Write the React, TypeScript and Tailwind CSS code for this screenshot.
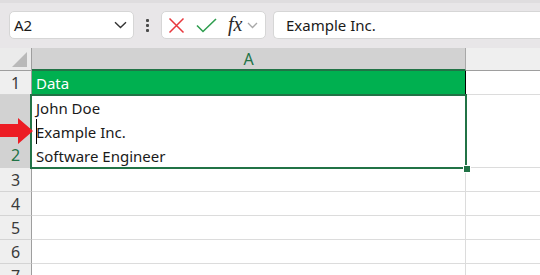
import React from 'react';

const GREEN = '#217346';

const RowHead = ({ label, selected, tall }: { label: string; selected?: boolean; tall?: boolean }) => (
    <div
        className={`w-[32px] shrink-0 flex justify-center border-r border-[#9e9e9e] text-[16px] ${
            selected ? 'bg-[#d2d2d2] text-[#217346]' : 'bg-[#efefef] text-[#3a3a3a] border-b border-b-[#d4d4d4]'
        } ${tall ? 'items-end pb-[1px]' : 'items-center'}`}
    >
        {label}
    </div>
);

const EmptyRow = ({ label }: { label: string }) => (
    <div className="flex h-[24px]">
        <RowHead label={label} />
        <div className="w-[434px] shrink-0 border-b border-r border-[#dcdcdc]" />
        <div className="flex-1 border-b border-[#dcdcdc]" />
    </div>
);

export default function App() {
    return (
        <div className="w-[540px] h-[275px] overflow-hidden bg-white font-['Noto_Sans',sans-serif] text-[#1a1a1a]">
            {/* formula bar */}
            <div className="h-[48px] bg-[#e8e6e8] border-t-[3px] border-[#dfdddf] flex items-start pt-[8px] pl-[9px]">
                <div className="w-[125px] h-[28px] bg-white rounded-[5px] border border-[#d6d6d6] flex items-center justify-between pl-[4px] pr-[6px]">
                    <span className="text-[15px] text-[#1a1a1a]">A2</span>
                    <svg width="13" height="8" viewBox="0 0 13 8" fill="none">
                        <path d="M1 1.2 L6.5 6.5 L12 1.2" stroke="#333" strokeWidth="1.4" />
                    </svg>
                </div>
                <div className="w-[4px] ml-[11px] h-[28px] flex flex-col items-center justify-center gap-[2px]">
                    <div className="w-[3px] h-[3px] bg-[#4a4a4a] rounded-[1px]" />
                    <div className="w-[3px] h-[3px] bg-[#4a4a4a] rounded-[1px]" />
                    <div className="w-[3px] h-[3px] bg-[#4a4a4a] rounded-[1px]" />
                </div>
                <div className="w-[105px] h-[28px] ml-[12px] bg-white rounded-[5px] border border-[#d6d6d6] flex items-center pl-[6px]">
                    <svg width="17" height="17" viewBox="0 0 17 17" fill="none">
                        <path d="M1.5 1.5 L15.5 15.5 M15.5 1.5 L1.5 15.5" stroke="#e8383d" strokeWidth="1.5" />
                    </svg>
                    <svg width="21" height="15" viewBox="0 0 21 15" fill="none" className="ml-[11px]">
                        <path d="M1 7.5 L7 13.5 L20 1" stroke="#2f9e4f" strokeWidth="1.6" />
                    </svg>
                    <span className="ml-[11px] font-['Liberation_Serif',serif] italic text-[20px] leading-none text-[#2a2a2a] -mt-[3px]">fx</span>
                    <svg width="11" height="7" viewBox="0 0 11 7" fill="none" className="ml-[5px]">
                        <path d="M1 1 L5.5 5.5 L10 1" stroke="#a8a8a8" strokeWidth="1.3" />
                    </svg>
                </div>
                <div className="flex-1 h-[28px] ml-[7px] bg-white rounded-l-[5px] border border-r-0 border-[#d6d6d6] flex items-center pl-[12px]">
                    <span className="text-[15px] text-[#1a1a1a]">Example Inc.</span>
                </div>
            </div>

            {/* grid */}
            <div className="relative">
                {/* column headers */}
                <div className="flex h-[23px]">
                    <div className="w-[32px] shrink-0 bg-[#ebebeb] border-r border-b border-[#9e9e9e] flex items-end justify-end pr-[4px] pb-[3px]">
                        <svg width="15" height="15" viewBox="0 0 15 15">
                            <path d="M15 0 L15 15 L0 15 Z" fill="#b9b9b9" />
                        </svg>
                    </div>
                    <div className="w-[434px] shrink-0 bg-[#d2d2d2] border-b-2 border-[#217346] border-r border-r-[#a8a8a8] flex items-center justify-center text-[16px] text-[#217346]">
                        A
                    </div>
                    <div className="flex-1 bg-[#efefef] border-b border-[#9e9e9e]" />
                </div>

                {/* row 1 */}
                <div className="flex h-[24px]">
                    <RowHead label="1" />
                    <div className="w-[434px] shrink-0 bg-[#00b050] border-r border-black flex items-center pl-[4px] text-[15px] text-white">
                        Data
                    </div>
                    <div className="flex-1 border-b border-[#dcdcdc]" />
                </div>

                {/* row 2 */}
                <div className="flex h-[73px]">
                    <RowHead label="2" selected tall />
                    <div className="w-[434px] shrink-0 flex flex-col justify-center pl-[4px] text-[15px] leading-[24px]">
                        <span>John Doe</span>
                        <span className="relative">
                            <span className="absolute left-[0px] top-[-1px] w-[1px] h-[25px] bg-black" />
                            Example Inc.
                        </span>
                        <span>Software Engineer</span>
                    </div>
                    <div className="flex-1 border-b border-[#dcdcdc]" />
                </div>

                <EmptyRow label="3" />
                <EmptyRow label="4" />
                <EmptyRow label="5" />
                <EmptyRow label="6" />
                <EmptyRow label="7" />

                {/* selection outline */}
                <div className="absolute left-[30px] top-[46px] w-[437px] h-[75px] border-2 border-[#217346] pointer-events-none" />
                <div className="absolute left-[464px] top-[117px] w-[6px] h-[6px] bg-[#217346] border border-white box-content -translate-x-[1px]" />

                {/* red arrow */}
                <svg className="absolute left-0 top-[70px]" width="34" height="26" viewBox="0 0 34 26">
                    <path d="M0 6 L18 6 L18 0 L33 13 L18 26 L18 19 L0 19 Z" fill="#ec1c24" />
                </svg>
            </div>
        </div>
    );
}
